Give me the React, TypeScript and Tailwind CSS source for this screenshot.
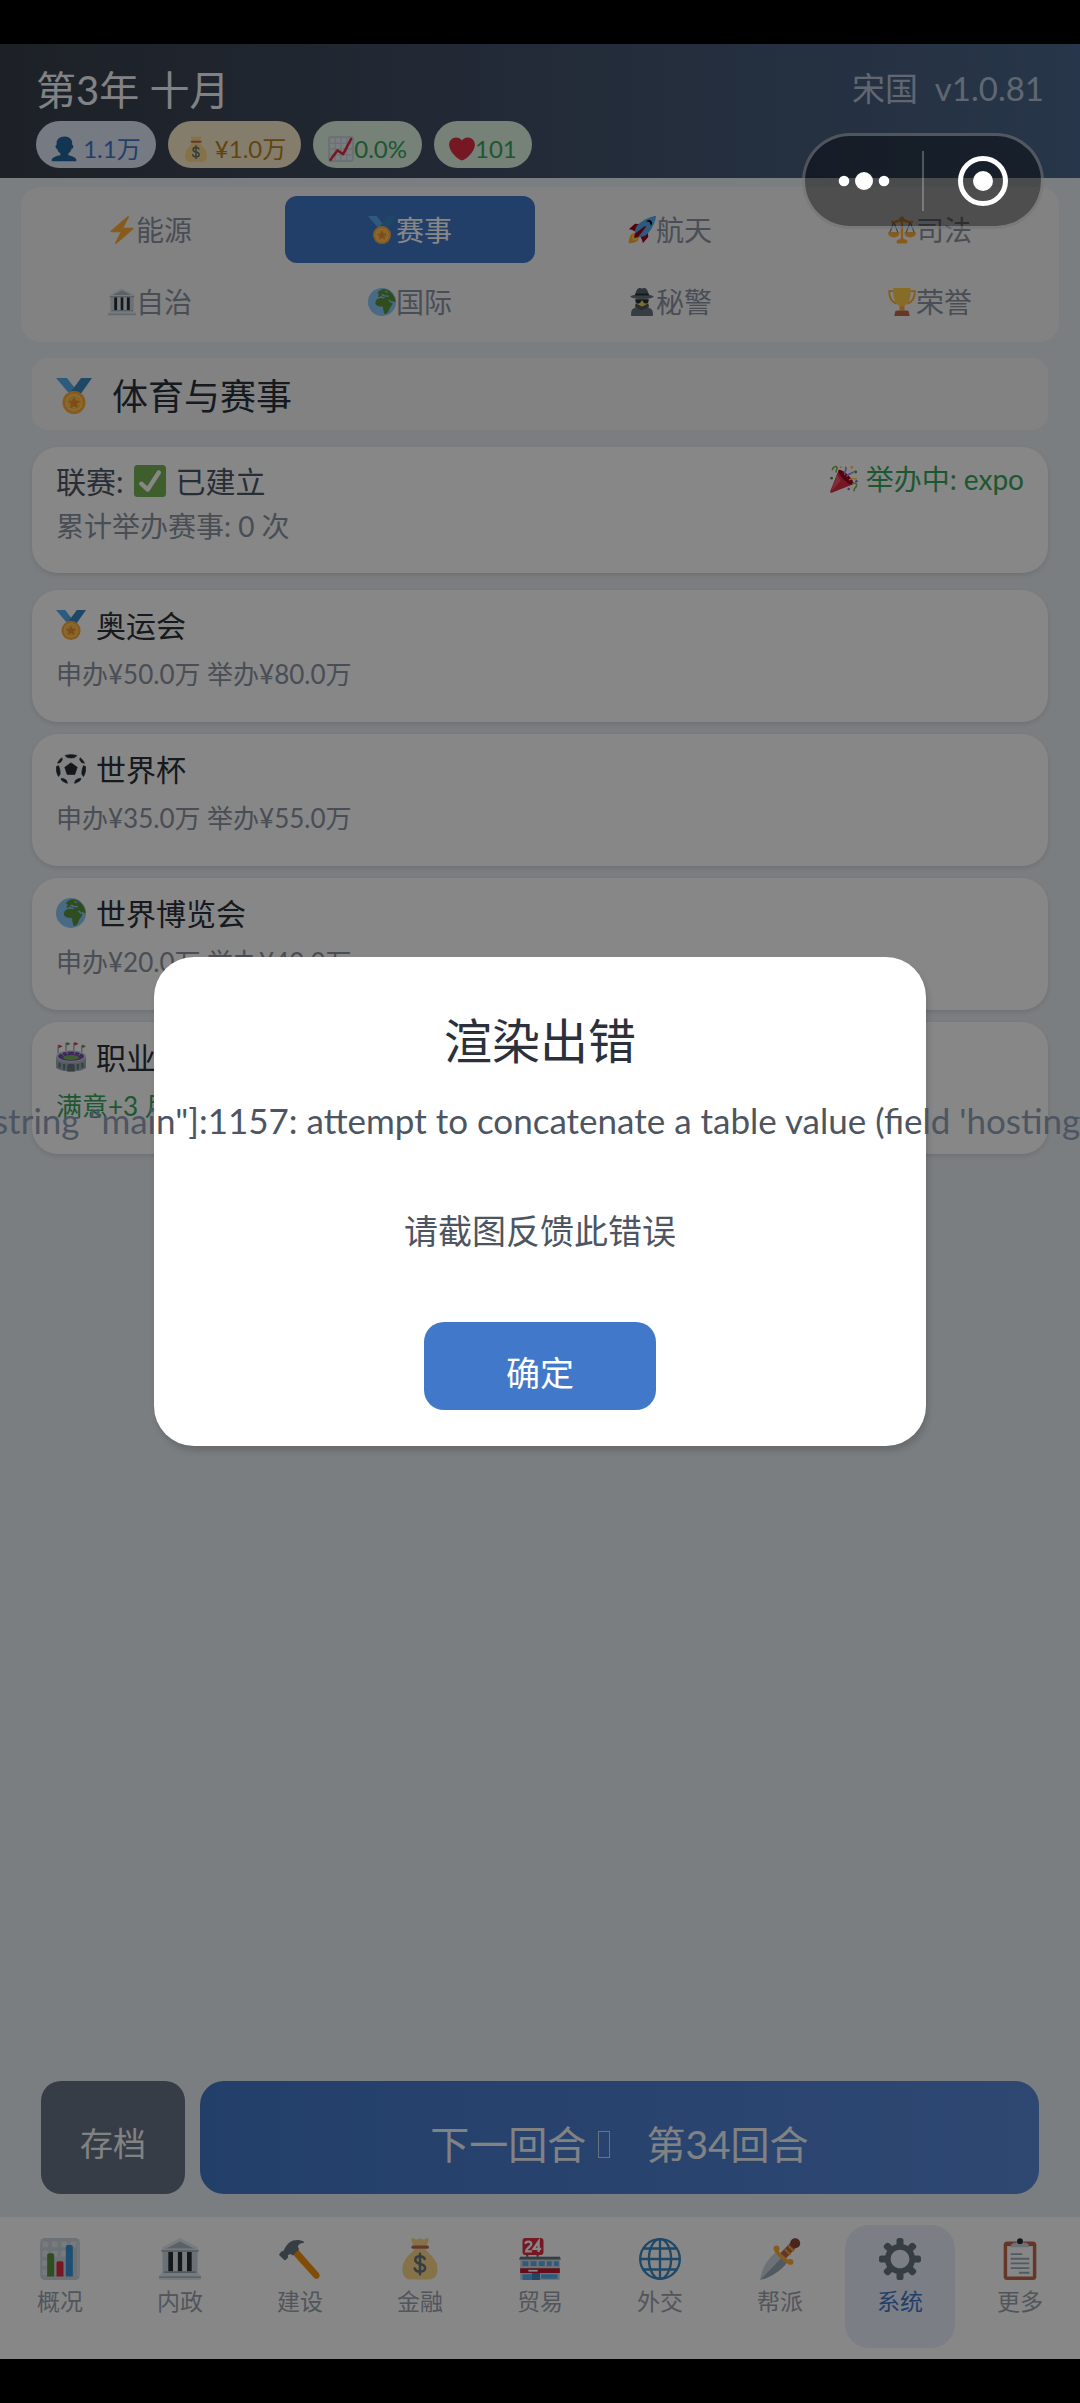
import React, { FC, ReactNode } from "react";

// Icons
type IconProps = { className?: string };

const Svg: FC<{ className?: string; children: ReactNode }> = ({
	className = "size-[1em]",
	children,
}) => (
	<svg
		viewBox="0 0 36 36"
		className={`shrink-0 ${className}`}
		aria-hidden="true"
	>
		{children}
	</svg>
);

const Person: FC<IconProps> = (props) => (
	<Svg {...props}>
		<path
			fill="#226699"
			d="M24 26.8v-2.57c2-1.35 4.08-3.78 4.7-6.9.19.1.2.17.42.17.99 0 1.7-1.28 1.7-2.87 0-1.56-.82-2.83-1.79-2.86.19-.68.3-1.58.3-2.74C29.33 5.17 26 .53 18.54.53c-6.63 0-10.78 4.64-10.78 8.5 0 1.13.07 2.05.19 2.76-.91.14-1.63 1.35-1.63 2.84 0 1.59.8 2.88 1.8 2.88.2 0 .02-.07.2-.17.63 3.11 2.68 5.55 4.68 6.9v2.4C8 27.3 1 30.08 1 32.88v1.06C1 35 2.08 35 3.14 35h29.72C33.92 35 35 35 35 33.94v-1.06c0-2.62-6-5.23-11-6.08z"
		/>
	</Svg>
);

const MoneyBag: FC<IconProps> = (props) => (
	<Svg {...props}>
		<path
			fill="#FDD888"
			d="M31.9 21c-2.5-5.5-7.2-8.2-9.5-11.7h-8.8C11.3 12.8 6.5 15.500 4.100 21 2.400 24.500 1.500 35.500 10 35.500h16c8.500 0 7.600-11 5.900-14.500z"
		/>
		<path
			fill="#FDD888"
			d="M12.500 7.500 10.500 1.500c-.3-.9.6-1.500 1.500-1.200l3 1 3-.9 3 .9 3-1c.9-.3 1.800.3 1.500 1.200l-2 6z"
		/>
		<path fill="#BF6952" d="M12 6.500h12.300a1.400 1.400 0 010 2.800H12a1.400 1.400 0 010-2.800z" />
		<path
			fill="none"
			stroke="#67757F"
			strokeWidth="2.200"
			strokeLinecap="round"
			d="M22 18c-.5-1.500-2-2.300-4-2.300-2.400 0-4 1.300-4 3.200 0 4.600 8.400 2 8.400 6.700 0 2-1.800 3.300-4.400 3.300-2.300 0-4-1-4.500-2.800M18 13.500v17.500"
		/>
	</Svg>
);

const ChartUp: FC<IconProps> = (props) => (
	<Svg {...props}>
		<rect width="36" height="36" rx="4" fill="#CCD6DD" />
		<path
			fill="#E9EEF2"
			d="M3 3h6v6H3zM11 3h6v6h-6zM19 3h6v6h-6zM27 3h6v6h-6zM3 11h6v6H3zM11 11h6v6h-6zM19 11h6v6h-6zM27 11h6v6h-6zM3 19h6v6H3zM11 19h6v6h-6zM19 19h6v6h-6zM27 19h6v6h-6zM3 27h6v6H3zM11 27h6v6h-6zM19 27h6v6h-6zM27 27h6v6h-6z"
		/>
		<path
			fill="none"
			stroke="#DD2E44"
			strokeWidth="3.600"
			strokeLinecap="round"
			strokeLinejoin="round"
			d="M3.500 33 13 20l8 5L32 4"
		/>
	</Svg>
);

const Heart: FC<IconProps> = (props) => (
	<Svg {...props}>
		<path
			fill="#DD2E44"
			d="M35.885 11.833c0-5.45-4.418-9.868-9.867-9.868-3.308 0-6.227 1.633-8.018 4.129-1.791-2.496-4.71-4.129-8.017-4.129-5.45 0-9.868 4.417-9.868 9.868 0 .772.098 1.52.266 2.241C1.751 22.587 11.216 31.568 18 34.034c6.783-2.466 16.249-11.447 17.617-19.959.17-.721.268-1.469.268-2.242z"
		/>
	</Svg>
);

const Bolt: FC<IconProps> = (props) => (
	<Svg {...props}>
		<path
			fill="#FFAC33"
			d="M32.938 15.651C32.792 15.26 32.418 15 32 15H19.925L26.89 1.458c.219-.426.106-.947-.271-1.243C26.437.071 26.218 0 26 0c-.233 0-.466.082-.653.243L18 6.588 3.347 19.243c-.316.273-.43.714-.284 1.105S3.582 21 4 21h12.075L9.11 34.542c-.219.426-.106.947.271 1.243.182.144.401.215.619.215.233 0 .466-.082.653-.243L18 29.412l14.653-12.655c.317-.273.43-.714.285-1.106z"
		/>
	</Svg>
);

const Medal: FC<IconProps> = (props) => (
	<Svg {...props}>
		<path fill="#55ACEE" d="M0 0h11l10.500 13.500-7 3.500z" />
		<path fill="#3B88C3" d="M25 0h11L24 17l-9-3.500z" />
		<circle cx="18" cy="24.500" r="11.500" fill="#FFAC33" />
		<circle cx="18" cy="24.500" r="8.500" fill="#FFD983" />
		<circle cx="18" cy="24.500" r="7.600" fill="#FFBF4F" />
		<path
			fill="#F18F26"
			d="m18 18.500 1.800 4.100 4.400.4-3.300 2.900 1 4.300-3.900-2.300-3.900 2.300 1-4.300-3.300-2.900 4.400-.4z"
		/>
	</Svg>
);

const Rocket: FC<IconProps> = (props) => (
	<Svg {...props}>
		<path fill="#A0041E" d="m1 17 8-7 16 1 1 16-7 8s.001-5.999-6-12-12-6-12-6z" />
		<path fill="#FFAC33" d="M.973 35s-.036-7.979 2.985-11S15 21.187 15 21.187 14.999 29 11.999 32c-3 3-11.026 3-11.026 3z" />
		<circle cx="8.999" cy="27" r="4" fill="#FFCC4D" />
		<path fill="#55ACEE" d="M35.999 0s-10 0-22 10c-6 5-6 14-4 16s11 2 16-4c10-12 10-22 10-22z" />
		<path d="M26.999 5c-1.623 0-3.013.971-3.641 2.360A3.970 3.970 0 0 1 24.999 7c2.209 0 4 1.791 4 4 0 .586-.133 1.139-.359 1.640A3.993 3.993 0 0 0 30.999 9c0-2.209-1.791-4-4-4z" />
		<path fill="#A0041E" d="M8 28s0-4 1-5 13.001-10.999 14-10-9.001 13-10.001 14S8 28 8 28z" />
	</Svg>
);

const Scales: FC<IconProps> = (props) => (
	<Svg {...props}>
		<path
			fill="none"
			stroke="#66757F"
			strokeWidth="1.400"
			d="M7.500 8 2 22h11L7.500 8zM28.500 8 23 22h11L28.500 8z"
		/>
		<path
			fill="#FFAC33"
			d="M16.500 4h3v26h-3zM4 6.500c5 0 8-1 11-2.500h6c3 1.500 6 2.500 11 2.500v2.800c-6 0-9-.8-12-2.300h-4C13 8.500 10 9.300 4 9.300z"
		/>
		<circle cx="18" cy="4" r="3.200" fill="#FFAC33" />
		<path
			fill="#FFAC33"
			d="M0 21h15c0 4-3 6.500-7.500 6.500S0 25 0 21zM21 21h15c0 4-3 6.500-7.500 6.500S21 25 21 21zM11 33c0-2 2-2.500 4-3 1-.4 1-2 3-2s2 1.600 3 2c2 .5 4 1 4 3 0 1.500-1 2.500-2 2.500H13c-1 0-2-1-2-2.500z"
		/>
	</Svg>
);

const Museum: FC<IconProps> = (props) => (
	<Svg {...props}>
		<path fill="#CCD6DD" d="M3 10h30v19H3z" />
		<path fill="#292F33" d="M8 12h4v17H8zM16 12h4v17h-4zM24 12h4v17h-4z" />
		<path fill="#E1E8ED" d="M2 11 3 8 18 0l15 8 1 3z" />
		<path fill="#AAB8C2" d="M6 9 18 3l12 6z" />
		<path fill="#E1E8ED" d="M12 12h4v17h-4zM20 12h4v17h-4zM3 29h30l3 4v2.200a.8.8 0 0 1-.8.8H.8a.8.8 0 0 1-.8-.8V33z" />
		<path fill="#99AAB5" d="M4 28.500h28V30H4zM0 33h36v1H0zM2 10.500h32v1.300H2z" />
	</Svg>
);

const Earth: FC<IconProps> = (props) => (
	<Svg {...props}>
		<circle cx="18" cy="18" r="18" fill="#88C9F9" />
		<path
			fill="#5C913B"
			d="M12 6.500c1-2 4-4.500 7-5 4-.5 8 1.500 11 4.500 3 3.200 5 7 5.500 11-.3 1.500-1.500 1.500-2.500.5-1.300-1.500-1.300.5-2.500 0-1.500-1-2-2.500-3.500-2.500s.5 2.500 2 3.500c1.500 1 3-.3 2.500 2-.6 2.500-3.300 4-4 6.500-.5 2.500-2.500 6-5 6.500-2.300 0-2-3-2.700-5-.6-1.500.2-3-.8-4.300-1-1-3.500-.3-5.500-.7-3-.8-4.500-3-4-5.500.6-2.500 3-4.800 6-5 2.500-.4 4 .8 5.500.3 1.200-1 0-1.600-1.500-1.500-1.300 0-1.500-1.300-2.700-1.500-1.300.2-1.300 1.500-3 1.300-1.800-.3-1-1.800 0-2.700 1-.8-1-1.300-1.800-2.400z"
		/>
		<path
			fill="#88C9F9"
			d="M17 8.500c2-1 3-.2 4.500.8 2 .8 3.500-.3 5 .7 1 1-1 1.600-2.500 1.400-2.500-.2-6-.4-7-2.900zM22 3.500c2 0 3.500 1 3.200 2.200-1.500.6-3.800-.6-3.200-2.200z"
		/>
	</Svg>
);

const Detective: FC<IconProps> = (props) => (
	<Svg {...props}>
		<path fill="#FFCC4D" d="M10 12h16v9c0 5-4 8-8 8s-8-3-8-8z" />
		<path fill="#66757F" d="M4 36v-4c0-4 2.500-6 6-7V20l8 4 8-4v5c3.500 1 6 3 6 7v4z" />
		<path fill="#4B5A64" d="m10 20 8 4 8-4 1 4-9 5-9-5z" />
		<path fill="#546570" d="M9.500 9C10 4 12 0 15 0c1.500 0 2 .8 3 .8S19.500 0 21 0c3 0 5 4 5.500 9z" />
		<path fill="#66757F" d="M3 10.500C7 8.500 12 8 18 8s11 .5 15 2.500c0 2-6 3.500-15 3.500S3 12.500 3 10.500z" />
		<path fill="#292F33" d="M9.500 14.500h17V16c0 2.500-1.500 4-3.700 4-2.300 0-3.300-1.500-3.800-3.500h-2C16.500 18.500 15.500 20 13.200 20 11 20 9.500 18.500 9.500 16zM9.300 7h17.400v2.500H9.300z" />
	</Svg>
);

const Trophy: FC<IconProps> = (props) => (
	<Svg {...props}>
		<path
			fill="none"
			stroke="#FFAC33"
			strokeWidth="2.400"
			d="M9 4H1.500c0 8 2.500 14 9.500 16M27 4h7.500c0 8-2.500 14-9.500 16"
		/>
		<path fill="#FFCC4D" d="M7 0h22c1 10-1 20-8 23v5h-6v-5C8 20 6 10 7 0z" />
		<path fill="#FFAC33" d="M15 23h6v6h-6z" />
		<path fill="#C1694F" d="M9 32c0-2 1-3 3-3h12c2 0 3 1 3 3l1 4H8z" />
	</Svg>
);

const CheckMark: FC<IconProps> = (props) => (
	<Svg {...props}>
		<rect width="36" height="36" rx="4" fill="#77B255" />
		<path
			fill="#FFF"
			d="M29.28 6.362c-1.156-.751-2.704-.422-3.458.736L14.936 23.877l-5.029-4.65c-1.014-.938-2.596-.875-3.533.138-.937 1.014-.875 2.596.139 3.533l7.209 6.666c.48.445 1.09.665 1.696.665.673 0 1.534-.282 2.099-1.139.332-.506 12.5-19.27 12.5-19.27.751-1.159.421-2.707-.737-3.458z"
		/>
	</Svg>
);

const Party: FC<IconProps> = (props) => (
	<Svg {...props}>
		<path fill="#DD2E44" d="M11 7 .3 33.700C-.2 35 1 36.200 2.300 35.700L29 25z" />
		<path fill="#EA596E" d="m9 12-7.500 22L14 20z" />
		<path fill="#A0041E" d="M29.500 24.500c-1.500 2-7-1-12-6s-8-10.500-6.300-12c1.600-1.500 7 1.500 12 6.300 5 5 8 9.500 6.300 11.700z" />
		<path fill="none" stroke="#77B255" strokeWidth="2" strokeLinecap="round" d="M3 6c1-4 5-5 6-3s-2 4-1 6M29 24c3-2 6 0 5 3s-4 3-3 6" />
		<path fill="none" stroke="#AA8DD8" strokeWidth="2.200" strokeLinecap="round" d="M19 12c-2-3 4-6 1-9M22 14c3-4 5-2 8-5" />
		<path fill="none" stroke="#FFCC4D" strokeWidth="1.800" strokeLinecap="round" d="M25 19c3-2 6-2 9-1" />
		<circle cx="2" cy="17" r="1.800" fill="#5C913B" />
		<circle cx="33" cy="9" r="1.800" fill="#5C913B" />
		<circle cx="28" cy="3" r="1.800" fill="#FFCC4D" />
		<circle cx="34" cy="21" r="1.600" fill="#9266CC" />
		<circle cx="24" cy="31" r="1.600" fill="#9266CC" />
		<circle cx="14" cy="3" r="1.400" fill="#FFCC4D" />
	</Svg>
);

const Football: FC<IconProps> = (props) => (
	<Svg {...props}>
		<circle cx="18" cy="18" r="18" fill="#F5F8FA" />
		<path
			fill="#292F33"
			stroke="#292F33"
			strokeWidth=".8"
			d="m18 10.500 7.500 5.500-2.900 8.500h-9.200L10.500 16zM11 1.800C15 .4 21 .4 25 1.800L23 4c-3 1-7 1-10 0zM35.400 15c.6 4.500-.4 9-2.500 12L31 24c0-4 .5-7 2-10zM.6 15c-.6 4.500.4 9 2.500 12L5 24c0-4-.5-7-2-10zM29.500 4.700c2 1.700 3.700 4 4.600 6.300l-3.200-.8c-1.500-1.200-2.300-2.800-2.600-4.600zM6.500 4.700c-2 1.700-3.700 4-4.600 6.300l3.200-.8c1.500-1.200 2.300-2.800 2.600-4.600zM29.500 31.200c-2 2-4.600 3.300-7.200 4l1-3.500c2-1.500 4-2.400 6.500-2.500zM6.500 31.200c2 2 4.600 3.300 7.200 4l-1-3.500c-2-1.500-4-2.400-6.500-2.500z"
		/>
	</Svg>
);

const Stadium: FC<IconProps> = (props) => (
	<Svg {...props}>
		<path fill="none" stroke="#66757F" strokeWidth="1" d="M2.500 4v12M12 1v12M21.500 1v12M31 4v12" />
		<path fill="#DD2E44" d="m3 3 5 2-5 2.500zM22 0l5 2-5 2.500z" />
		<path fill="#5C913B" d="m12.500 0 5 2-5 2.500zM31.500 3 36 5l-4.500 2.500z" />
		<path fill="#99AAB5" d="M0 17h36v14c-4 3.500-12 4.500-18 4.500S4 34.500 0 31z" />
		<ellipse cx="18" cy="17" rx="18" ry="7" fill="#CCD6DD" />
		<ellipse cx="18" cy="17" rx="15.500" ry="5.500" fill="#744EAA" />
		<path stroke="#CCD6DD" strokeWidth="1.200" d="m5 12 4 4M12 10.500l2 4M24 10.500l-2 4M31 12l-4 4" />
		<ellipse cx="18" cy="18.500" rx="9.500" ry="3" fill="#77B255" />
		<path fill="#66757F" d="M13.500 35.300V30a4.500 4.500 0 0 1 9 0v5.300zM3 25h2.500v6H3zM8.500 26.500H11v6.500H8.500zM25 26.500h2.500V33H25zM30.500 25H33v6h-2.500z" />
		<path fill="#AAB8C2" d="M0 17c2 4 9 6.500 18 6.500S34 21 36 17v4c-3 3.500-10 5-18 5S3 24.500 0 21z" />
	</Svg>
);

const BarChart: FC<IconProps> = (props) => (
	<Svg {...props}>
		<rect x="1" width="34" height="36" rx="4" fill="#CCD6DD" />
		<path
			fill="#E1E8ED"
			d="M3 3h5v5H3zM11 3h5v5h-5zM19 3h5v5h-5zM27 3h5v5h-5zM3 11h5v5H3zM11 11h5v5h-5zM19 11h5v5h-5zM3 19h5v5H3zM3 27h5v5H3zM33 3h1v30h-1z"
		/>
		<path fill="#5C913B" d="M7 14.500A1.500 1.500 0 0 1 8.500 13h3a1.500 1.500 0 0 1 1.500 1.500V33H7z" />
		<path fill="#DD2E44" d="M15 21.500a1.500 1.500 0 0 1 1.500-1.500h3a1.500 1.500 0 0 1 1.500 1.500V33h-6z" />
		<path fill="#3B94D9" d="M23 7.500A1.500 1.500 0 0 1 24.500 6h3A1.500 1.500 0 0 1 29 7.500V33h-6z" />
	</Svg>
);

const Hammer: FC<IconProps> = (props) => (
	<Svg {...props}>
		<path fill="#F4900C" d="m11 13 4.500-4L34 30c1.300 1.600 1 3.200 0 4.200s-2.700 1.200-4-.2z" />
		<path
			fill="#66757F"
			d="M.5 13.500 2 11.500l2-.5c1-3 3-5.500 5.500-7.500C12 1.500 17 .8 21 3c.8.6.5 1.200-.3 1.200-2.500 0-4.200 1.300-4.500 3.300l1 2.200-5.400 5.300-2-1.300-2.300 1 .4 2-2 2c-.5.5-1.200.5-1.700 0L.5 15c-.5-.5-.5-1 0-1.500z"
		/>
	</Svg>
);

const Store: FC<IconProps> = (props) => (
	<Svg {...props}>
		<path fill="#66757F" d="M6 12h2v6H6zM15 12h2v6h-2z" />
		<rect x="3" width="18" height="14.500" rx="2.500" fill="#DD2E44" />
		<path
			fill="none"
			stroke="#FFF"
			strokeWidth="2"
			d="M5.500 5c.3-2.600 5-2.600 5 .2 0 2.300-4.500 3.600-4.500 6.300h5M16.800 12V3l-4.300 6.300h6.500"
		/>
		<path fill="#CCD6DD" d="M1 16h34v19a1 1 0 0 1-1 1H2a1 1 0 0 1-1-1z" />
		<path fill="#66757F" d="M1 16h34l1 2.500H0z" />
		<path fill="#55ACEE" d="M3 20h5v4H3zM10 20h5v4h-5zM17 20h5v4h-5zM24 20h4v4h-4zM30 20h4v4h-4z" />
		<path fill="#BE1931" d="M1 26h34v4H1z" />
		<path fill="#FFF" d="M8 27.300h8v1.500H8z" />
		<path fill="#55ACEE" d="M3 31h8v5H3zM19 31h14v4H19z" />
		<path fill="#3B88C3" d="M11 30h7v6h-7z" />
	</Svg>
);

const Globe: FC<IconProps> = (props) => (
	<Svg {...props}>
		<g fill="none" stroke="#3B88C3" strokeWidth="2">
			<circle cx="18" cy="18" r="17" />
			<ellipse cx="18" cy="18" rx="9.500" ry="17" />
			<path d="M18 1v34M1 18h34M4 9h28M4 27h28" />
		</g>
	</Svg>
);

const Dagger: FC<IconProps> = (props) => (
	<Svg {...props}>
		<path fill="#CCD6DD" d="M14.500 12.500 24 21C18 29 9 34 1 36 2 27 7 18 14.500 12.500z" />
		<path fill="#99AAB5" d="M19.500 17 24 21C18 29 9 34 1 36z" />
		<path stroke="#BF6952" strokeWidth="6.500" d="m20 16 9-9.500" />
		<path stroke="#FFAC33" strokeWidth="1.400" d="m22 9.500 5 5M25 6.500l5 5" />
		<path
			fill="none"
			stroke="#FFAC33"
			strokeWidth="3.200"
			strokeLinecap="round"
			d="M15 9c-1 2.500 1.500 4.500 5 7.500 3 2.700 5 5 7 3.700"
		/>
		<circle cx="15" cy="9" r="2.500" fill="#FFAC33" />
		<circle cx="27" cy="20.500" r="2.500" fill="#FFAC33" />
		<circle cx="31" cy="4.500" r="4.300" fill="#8A4633" />
	</Svg>
);

const Gear: FC<IconProps> = (props) => (
	<Svg {...props}>
		<path
			fill="#66757F"
			d="M34 15h-3.362c-.324-1.369-.864-2.651-1.582-3.814l2.379-2.379c.781-.781.781-2.048 0-2.829l-1.414-1.414c-.781-.781-2.047-.781-2.828 0l-2.379 2.379C23.65 6.225 22.369 5.686 21 5.362V2c0-1.104-.896-2-2-2h-2c-1.104 0-2 .896-2 2v3.362c-1.369.324-2.651.864-3.814 1.582L8.808 4.565c-.781-.781-2.048-.781-2.828 0L4.565 5.979c-.781.781-.781 2.048-.001 2.829l2.379 2.379C6.225 12.350 5.686 13.632 5.362 15H2c-1.104 0-2 .896-2 2v2c0 1.104.896 2 2 2h3.362c.324 1.368.864 2.650 1.582 3.813l-2.379 2.379c-.78.78-.78 2.048.001 2.829l1.414 1.414c.78.78 2.047.78 2.828 0l2.379-2.379c1.163.719 2.445 1.258 3.814 1.582V34c0 1.104.896 2 2 2h2c1.104 0 2-.896 2-2v-3.362c1.368-.324 2.650-.864 3.813-1.582l2.379 2.379c.781.781 2.047.781 2.828 0l1.414-1.414c.781-.781.781-2.048 0-2.829l-2.379-2.379c.719-1.163 1.258-2.445 1.582-3.814H34c1.104 0 2-.896 2-2v-2C36 15.896 35.104 15 34 15zM18 26c-4.418 0-8-3.582-8-8s3.582-8 8-8 8 3.582 8 8-3.582 8-8 8z"
		/>
	</Svg>
);

const Clipboard: FC<IconProps> = (props) => (
	<Svg {...props}>
		<rect x="4" y="3" width="28" height="33" rx="3" fill="#C1694F" />
		<path fill="#FFF" d="M7 7h22v26H7z" />
		<path fill="#CCD6DD" d="M10 8c0-3 2-4 4-4h1c0-1.500 1.300-3 3-3s3 1.500 3 3h1c2 0 4 1 4 4z" />
		<circle cx="18" cy="2.700" r="2.500" fill="#292F33" />
		<path fill="#99AAB5" d="M10 13h10v1.600H10zM10 17h16v1.600H10zM10 21h16v1.600H10zM10 25h16v1.600H10zM17 29h9v1.600h-9z" />
	</Svg>
);

// Data
const stats = [
	{ Icon: Person, value: " 1.1万", style: "bg-[#dde7f8] text-[#4178c9]" },
	{ Icon: MoneyBag, value: " ¥1.0万", style: "bg-[#fbecca] text-[#b7821b]" },
	{ Icon: ChartUp, value: "0.0%", style: "bg-[#dff3e2] text-[#38a55c]" },
	{ Icon: Heart, value: "101", style: "bg-[#dff3e2] text-[#38a55c]" },
];

const tabs = [
	{ Icon: Bolt, label: "能源" },
	{ Icon: Medal, label: "赛事", active: true },
	{ Icon: Rocket, label: "航天" },
	{ Icon: Scales, label: "司法" },
	{ Icon: Museum, label: "自治" },
	{ Icon: Earth, label: "国际" },
	{ Icon: Detective, label: "秘警" },
	{ Icon: Trophy, label: "荣誉" },
];

const events = [
	{ Icon: Medal, name: "奥运会", note: "申办¥50.0万 举办¥80.0万" },
	{ Icon: Football, name: "世界杯", note: "申办¥35.0万 举办¥55.0万" },
	{ Icon: Earth, name: "世界博览会", note: "申办¥20.0万 举办¥40.0万" },
	{ Icon: Stadium, name: "职业联赛", note: "满意+3 月收", positive: true },
];

const navItems = [
	{ Icon: BarChart, label: "概况" },
	{ Icon: Museum, label: "内政" },
	{ Icon: Hammer, label: "建设" },
	{ Icon: MoneyBag, label: "金融" },
	{ Icon: Store, label: "贸易" },
	{ Icon: Globe, label: "外交" },
	{ Icon: Dagger, label: "帮派" },
	{ Icon: Gear, label: "系统", active: true },
	{ Icon: Clipboard, label: "更多" },
];

const Header: FC = () => (
	<header className="h-[134px] shrink-0 bg-linear-to-r from-[#383e4a] to-[#4b668c] pl-9 pr-9 pt-4">
		<div className="flex h-[61px] items-start justify-between">
			<h1 className="text-[40px] leading-[60px] text-[#f4f6fa]">第3年 十月</h1>
			<p className="whitespace-pre text-[33px] leading-[56px] text-[#b6c2d6]">
				宋国  v1.0.81
			</p>
		</div>
		<ul className="flex gap-3">
			{stats.map(({ Icon, value, style }) => (
				<li
					key={value}
					className={`flex h-[47px] items-center whitespace-pre rounded-full px-[15px] pt-2 text-[24px] ${style}`}
				>
					<Icon className="size-[26px]" />
					{value}
				</li>
			))}
		</ul>
	</header>
);

const Tabs: FC = () => (
	<nav className="mx-[21px] mt-[9px] grid grid-cols-4 gap-x-[10px] gap-y-[5px] rounded-[20px] bg-[#f5f6f7] px-1 pb-[7px] pt-[9px]">
		{tabs.map(({ Icon, label, active }) => (
			<button
				key={label}
				type="button"
				className={`flex h-[67px] items-center justify-center rounded-xl text-[28px] ${
					active ? "bg-[#4178c9] text-white" : "text-[#8b92a0]"
				}`}
			>
				<Icon />
				{label}
			</button>
		))}
	</nav>
);

const Events: FC = () => (
	<main className="mx-8 flex flex-1 flex-col">
		<h2 className="mt-4 flex h-[72px] items-center gap-5 rounded-2xl bg-[#f5f6f7] px-6 pt-1 text-[36px] text-[#2b303a]">
			<Medal />
			体育与赛事
		</h2>
		<section className="mt-[17px] flex h-[126px] justify-between rounded-[26px] bg-white px-6 pt-3 shadow-[0_2px_5px_rgba(90,100,130,0.18)]">
			<div>
				<p className="flex h-11 items-center gap-[10px] text-[30px] text-[#4d5566]">
					联赛: <CheckMark className="size-8" /> 已建立
				</p>
				<p className="text-[28px] leading-[46px] text-[#8b92a0]">
					累计举办赛事: 0 次
				</p>
			</div>
			<p className="flex h-10 items-center gap-2 text-[28px] text-[#38a55c]">
				<Party /> 举办中: expo
			</p>
		</section>
		<ul className="mt-[17px] flex flex-col gap-3">
			{events.map(({ Icon, name, note, positive }) => (
				<li
					key={name}
					className="h-[132px] rounded-[26px] bg-white px-6 pt-3 shadow-[0_2px_5px_rgba(90,100,130,0.18)]"
				>
					<h3 className="flex h-[46px] items-center gap-[10px] text-[30px] text-[#2b303a]">
						<Icon />
						{name}
					</h3>
					<p
						className={`text-[26px] leading-[52px] ${
							positive ? "text-[#38a55c]" : "text-[#8b92a0]"
						}`}
					>
						{note}
					</p>
				</li>
			))}
		</ul>
	</main>
);

const Actions: FC = () => (
	<div className="mx-[41px] mb-[23px] flex h-[113px] gap-[15px]">
		<button
			type="button"
			className="w-36 rounded-[20px] bg-[#667384] pt-3 text-[33px] text-[#f4f6fa]"
		>
			存档
		</button>
		<button
			type="button"
			className="flex flex-1 items-center justify-center rounded-3xl bg-linear-to-r from-[#4178c9] to-[#5788d7] pt-[14px] text-[39px] text-[#f4f6fa]"
		>
			下一回合
			<span className="ml-3 mr-9 h-[27px] w-3 border border-white/70" />
			第34回合
		</button>
	</div>
);

const BottomNav: FC = () => (
	<nav className="grid h-[142px] grid-cols-9 bg-white pt-2">
		{navItems.map(({ Icon, label, active }) => (
			<a
				key={label}
				href="#"
				className={`mx-[5px] flex h-[123px] flex-col items-center rounded-3xl pt-[13px] text-[23px] ${
					active ? "bg-[#e8effc] text-[#4178c9]" : "text-[#9aa1ae]"
				}`}
			>
				<Icon className="size-[42px]" />
				<span className="mt-[5px] leading-8">{label}</span>
			</a>
		))}
	</nav>
);

const MiniCapsule: FC = () => (
	<div className="absolute right-9 top-[89px] z-20 flex h-24 w-[242px] items-center rounded-full border-[3px] border-white/25 bg-black/40">
		<button type="button" aria-label="More" className="flex flex-1 justify-center">
			<svg viewBox="0 0 52 20" className="h-5 w-[52px]" fill="#fff">
				<circle cx="6" cy="10" r="5.300" />
				<circle cx="26" cy="10" r="9" />
				<circle cx="46" cy="10" r="5.300" />
			</svg>
		</button>
		<span className="h-[60px] w-[2px] bg-white/25" />
		<button type="button" aria-label="Close" className="flex flex-1 justify-center">
			<svg viewBox="0 0 50 50" className="size-[50px]">
				<circle cx="25" cy="25" r="22.500" fill="none" stroke="#fff" strokeWidth="5" />
				<circle cx="25" cy="25" r="10" fill="#fff" />
			</svg>
		</button>
	</div>
);

const ErrorDialog: FC = () => (
	<div className="absolute inset-0 z-10 flex items-center justify-center overflow-hidden bg-black/[0.47]">
		<div
			role="alertdialog"
			aria-labelledby="error-title"
			className="flex h-[489px] w-[772px] flex-col items-center rounded-[40px] bg-white pb-9 pt-[50px] shadow-[2px_5px_6px_rgba(0,0,0,0.15)]"
		>
			<h2 id="error-title" className="text-[48px] leading-[68px] text-[#2b303a]">
				渲染出错
			</h2>
			<p className="mt-5 whitespace-nowrap text-[35px] leading-[50px] text-[#4d5562]">
				[string "main"]:1157: attempt to concatenate a table value (field
				'hosting')
			</p>
			<p className="mt-[61px] text-[34px] leading-[50px] text-[#4d5562]">
				请截图反馈此错误
			</p>
			<button
				type="button"
				className="mt-auto h-[88px] w-[232px] rounded-[20px] bg-[#4178c9] pt-3 text-[34px] text-white"
			>
				确定
			</button>
		</div>
	</div>
);

const App: FC = () => (
	<div className="flex min-h-screen flex-col overflow-hidden bg-black py-11 font-['Lato','Noto_Sans_CJK_SC',sans-serif]">
		<div className="relative flex flex-1 flex-col bg-[#e9eef1]">
			<Header />
			<Tabs />
			<Events />
			<Actions />
			<BottomNav />
			<ErrorDialog />
			<MiniCapsule />
		</div>
	</div>
);

export default App;
